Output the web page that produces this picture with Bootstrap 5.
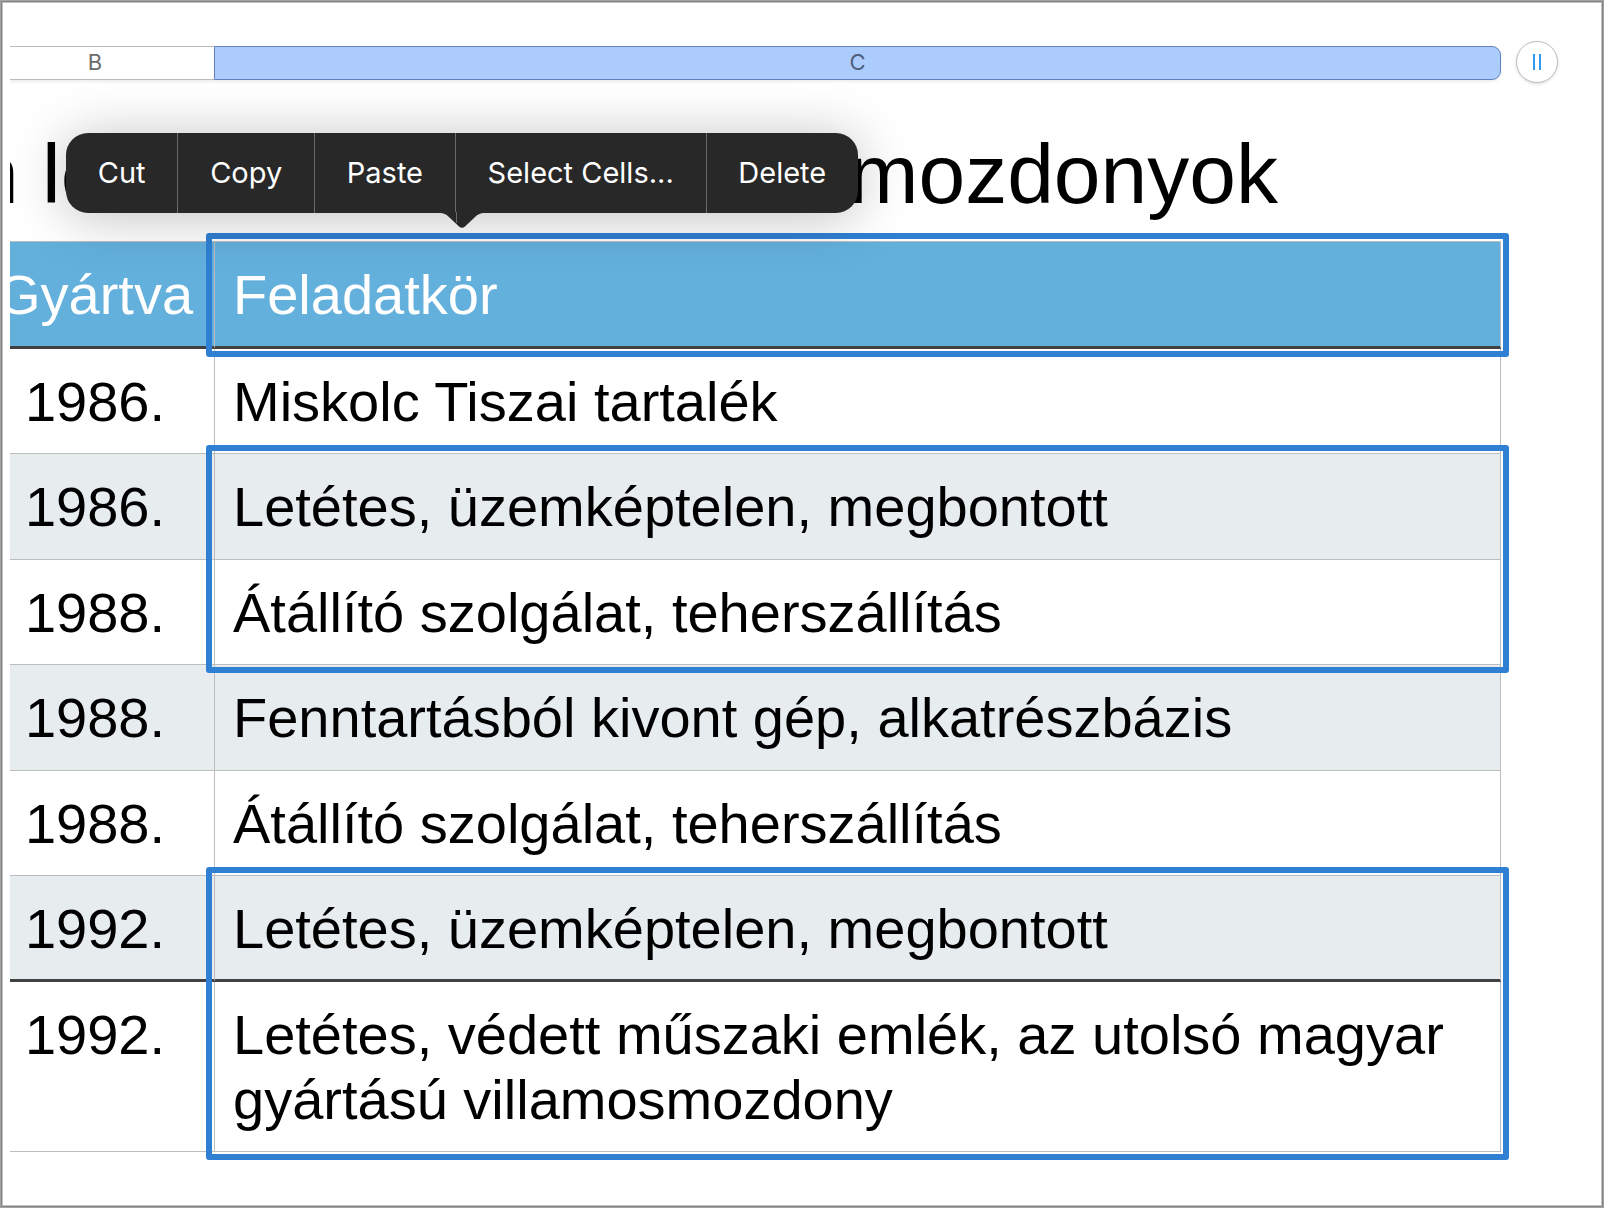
<!DOCTYPE html>
<html lang="hu">
<head>
<meta charset="utf-8">
<meta name="viewport" content="width=device-width, initial-scale=1">
<title>Villamosmozdonyok</title>
<link href="https://cdn.jsdelivr.net/npm/bootstrap@5.3.0/dist/css/bootstrap.min.css" rel="stylesheet">
<style>
body { background: #fff; color: #000; font-family: "Liberation Sans", Arial, sans-serif; }
.app-frame { border: 1px solid #a3a5a3; box-shadow: inset 0 0 0 1px #808280, inset 0 0 0 2px #c4c6c4; padding: 0 2px 0 9px; }
.sheet-view { overflow: hidden; padding: 40px 43px 40px 0; }
.sheet-body { margin-left: -34px; }

/* column ruler */
.ruler button { height: 34px; margin-top: 5px; font: 400 22px/30px Inter, sans-serif; color: #6b6b6b; border: 1px solid #bcbcbc; border-width: 1px 0; background: #fff; box-shadow: 0 2px 3px rgba(0,0,0,.07); padding: 0 0 2px; }
.ruler .ruler-b { width: 238px; flex: none; }
.ruler .ruler-c { background: #adccfe; color: #4e5f7c; border: 1px solid #6083bf; border-radius: 0 9px 9px 0; }
.ruler .ruler-add { width: 42px; height: 42px; margin: 0 0 0 15px; padding: 0; flex: none; border: 1px solid #bfbfbf; border-radius: 50%; box-shadow: 0 1px 3px rgba(0,0,0,.15); }

.sheet-title { font-size: 84px; line-height: 96px; font-weight: 400; margin: 43px 0 19px -4px; padding-right: 280px; white-space: nowrap; }

/* data table */
.grid-wrap { margin-right: 57px; }
.loco { width: 100%; table-layout: fixed; border-collapse: separate; border-spacing: 0; font-size: 56px; line-height: 65px; border-top: 1px solid #bdbdbd; }
.loco .col-year { width: 239px; }
.loco th, .loco td { font-weight: 400; padding: 20px 18px 19px; border: 0 solid #bdbdbd; border-width: 0 1px 1px 0; vertical-align: top; }
.loco th:first-child, .loco td:first-child { text-align: center; padding-left: 0; padding-right: 0; }
.loco thead th { background: #63b0dd; color: #fff; border-bottom: 3px solid #414141; }
.loco .shaded > * { background: #e7ecee; padding-bottom: 20px; }
.loco .strong-line > * { border-bottom: 3px solid #414141; padding-bottom: 18px; }
.picked { position: relative; }
.picked::after { content: ""; position: absolute; left: 230px; right: -8px; top: -9px; bottom: -8px; border: 6px solid #2f80d3; border-radius: 3px; pointer-events: none; }

/* edit menu */
.edit-menu { position: absolute; left: 65px; top: 132px; width: 792px; height: 80px; background: #282828; border-radius: 22px; box-shadow: 0 4px 54px rgba(0,0,0,.25); z-index: 5; }
.edit-menu button { background: none; border: 0; border-right: 1px solid #6a6a6a; color: #fff; font: 400 29px/34px Inter, sans-serif; padding: 0 0 0; flex: 1 1 auto; white-space: nowrap; }
.edit-menu button:last-of-type { border-right: 0; }
.edit-menu svg { position: absolute; left: 372px; top: 100%; margin-top: -1px; }
</style>
<script src="https://cdn.jsdelivr.net/npm/bootstrap@5.3.0/dist/js/bootstrap.bundle.min.js"></script>
</head>
<body>
<main class="app-frame min-vh-100 position-relative">
  <div class="sheet-view">
    <div class="sheet-body">
      <div class="ruler d-flex align-items-start">
        <button type="button" class="ruler-b">B</button>
        <button type="button" class="ruler-c flex-grow-1">C</button>
        <button type="button" class="ruler-add d-flex align-items-center justify-content-center" aria-label="Add column">
          <svg width="8" height="16" viewBox="0 0 8 16" aria-hidden="true"><path d="M0 0h2v16H0zM6 0h2v16H6z" fill="#2f9bf0"/></svg>
        </button>
      </div>
      <h1 class="sheet-title d-flex justify-content-between"><span>n le</span><span>mozdonyok</span></h1>
      <div class="grid-wrap">
        <table class="loco">
          <colgroup><col class="col-year"><col></colgroup>
          <thead class="picked">
            <tr><th scope="col">Gyártva</th><th scope="col">Feladatkör</th></tr>
          </thead>
          <tbody>
            <tr><td>1986.</td><td>Miskolc Tiszai tartalék</td></tr>
          </tbody>
          <tbody class="picked">
            <tr class="shaded"><td>1986.</td><td>Letétes, üzemképtelen, megbontott</td></tr>
            <tr><td>1988.</td><td>Átállító szolgálat, teherszállítás</td></tr>
          </tbody>
          <tbody>
            <tr class="shaded"><td>1988.</td><td>Fenntartásból kivont gép, alkatrészbázis</td></tr>
            <tr><td>1988.</td><td>Átállító szolgálat, teherszállítás</td></tr>
          </tbody>
          <tbody class="picked">
            <tr class="shaded strong-line"><td>1992.</td><td>Letétes, üzemképtelen, megbontott</td></tr>
            <tr><td>1992.</td><td>Letétes, védett műszaki emlék, az utolsó magyar gyártású villamosmozdony</td></tr>
          </tbody>
        </table>
      </div>
    </div>
  </div>
  <div class="edit-menu d-flex" role="toolbar" aria-label="Edit">
    <button type="button">Cut</button>
    <button type="button">Copy</button>
    <button type="button">Paste</button>
    <button type="button">Select Cells...</button>
    <button type="button">Delete</button>
    <svg width="48" height="17" viewBox="0 0 48 17" aria-hidden="true"><path d="M0 0H48V1C41 1 39 3 36 6L27 14.500Q24 17 21 14.500L12 6C9 3 7 1 0 1Z" fill="#282828"/><path d="M18.500 0V11" stroke="#6a6a6a"/></svg>
  </div>
</main>
</body>
</html>
